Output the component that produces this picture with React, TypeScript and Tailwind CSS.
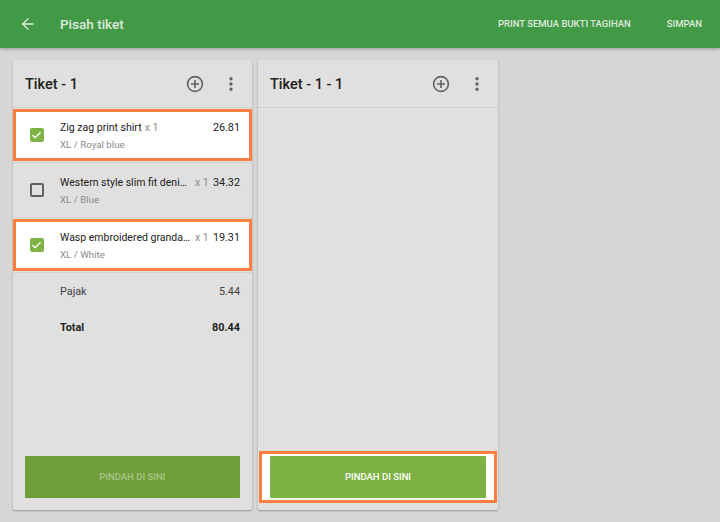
import { ArrowLeft, Check, EllipsisVertical } from "lucide-react";

interface ItemProps {
  name: string;
  variant: string;
  price: string;
  checked?: boolean;
}

const PlusCircle = () => (
  <svg width="20" height="20" viewBox="0 0 20 20" fill="none" stroke="#616161" strokeWidth="1.6">
    <circle cx="10" cy="10" r="7.4" />
    <path d="M10 6v8M6 10h8" />
  </svg>
);

const TicketHeader = ({ title }: { title: string }) => (
  <div className="flex h-12 shrink-0 items-center border-b border-[#cfcfcf] pl-3 pr-[11px]">
    <span className="flex-1 pt-[3px] text-[14.5px] font-medium text-[#212121]">{title}</span>
    <PlusCircle />
    <span className="ml-[16px] flex w-5 justify-center">
      <EllipsisVertical size={18} strokeWidth={2.4} className="text-[#616161]" />
    </span>
  </div>
);

const ItemRow = ({ name, variant, price, checked }: ItemProps) => (
  <div className="h-[55px] border-b border-[#d2d2d2] pt-px">
    <div
      className={
        checked
          ? "flex h-[52px] items-center border-[3px] border-[#ff7f41] bg-white"
          : "flex h-[52px] items-center border-[3px] border-transparent"
      }
    >
      <span className="flex w-[44px] shrink-0 justify-center pr-[3px]">
        {checked ? (
          <span className="flex h-[14px] w-[14px] items-center justify-center rounded-[2px] bg-[#7cb342]">
            <Check size={11} strokeWidth={3} className="text-white" />
          </span>
        ) : (
          <span className="h-[14px] w-[14px] rounded-[2px] border-2 border-[#616161]" />
        )}
      </span>
      <div className="min-w-0 flex-1 pr-[9px] pt-[2px]">
        <div className="flex items-baseline text-[10.5px] leading-[16px] text-[#212121]">
          <span className="max-w-[132px] truncate">{name}</span>
          <span className="ml-[3px] flex-1 whitespace-nowrap text-[#8a8a8a]">x 1</span>
          <span className="shrink-0 pl-[4px] text-[10.8px]">{price}</span>
        </div>
        <div className="mt-[2px] text-[9.75px] leading-[14px] text-[#8a8a8a]">{variant}</div>
      </div>
    </div>
  </div>
);

const SummaryRow = ({ label, value, bold }: { label: string; value: string; bold?: boolean }) => (
  <div
    className={
      bold
        ? "flex h-9 items-center pl-[47px] pr-3 pt-[2px] text-[10.8px] font-bold text-[#212121]"
        : "flex h-9 items-center pl-[47px] pr-3 pt-[2px] text-[10.8px] text-[#424242]"
    }
  >
    <span className="flex-1">{label}</span>
    <span>{value}</span>
  </div>
);

export default function App() {
  return (
    <div className="flex h-[522px] w-[720px] flex-col overflow-hidden bg-[#d6d6d6] font-['Roboto',sans-serif]">
      <header className="flex h-12 shrink-0 items-center bg-[#439a46] pl-[19px] pr-[18px] text-[#dfeadf] shadow-[0_1px_3px_rgba(0,0,0,0.3)]">
        <ArrowLeft size={18} strokeWidth={1.7} />
        <h1 className="ml-[23px] flex-1 text-[13.5px] font-medium">Pisah tiket</h1>
        <span className="text-[9.5px] font-medium">PRINT SEMUA BUKTI TAGIHAN</span>
        <span className="ml-9 text-[9.5px] font-medium">SIMPAN</span>
      </header>
      <main className="flex flex-1 gap-[6px] pb-3 pl-[13px] pt-3">
        <section className="flex w-[239px] flex-col rounded-[2px] bg-[#e0e0e0] shadow-[0_1px_2px_rgba(0,0,0,0.3)]">
          <TicketHeader title="Tiket - 1" />
          <ItemRow name="Zig zag print shirt" variant="XL / Royal blue" price="26.81" checked />
          <ItemRow name="Western style slim fit denim shirt" variant="XL / Blue" price="34.32" />
          <ItemRow name="Wasp embroidered grandad shirt" variant="XL / White" price="19.31" checked />
          <SummaryRow label="Pajak" value="5.44" />
          <SummaryRow label="Total" value="80.44" bold />
          <div className="mt-auto pb-3 pl-[11.5px] pr-3">
            <button className="h-[42px] w-full rounded-[1px] bg-[#6f9e38] text-[9.5px] font-medium text-[#a9c688]">
              PINDAH DI SINI
            </button>
          </div>
        </section>
        <section className="flex w-[240px] flex-col rounded-[2px] bg-[#e0e0e0] shadow-[0_1px_2px_rgba(0,0,0,0.3)]">
          <TicketHeader title="Tiket - 1 - 1" />
          <div className="mb-[7px] mt-auto px-px">
            <div className="border-[3px] border-[#ff7f41] bg-white px-2 py-[2px]">
              <button className="h-[42px] w-full rounded-[1px] bg-[#7cb342] text-[9.5px] font-medium text-white">
                PINDAH DI SINI
              </button>
            </div>
          </div>
        </section>
      </main>
    </div>
  );
}
